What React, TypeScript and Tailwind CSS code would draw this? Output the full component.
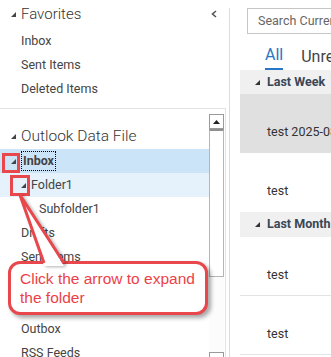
import React from "react";

const FONT = "font-['Roboto','Noto_Sans',sans-serif]";

// small filled corner triangle used by Outlook for expanded nodes
function Tri({ color = "#444" }: { color?: string }) {
  return (
    <svg width="5" height="5" viewBox="0 0 5 5" className="shrink-0">
      <polygon points="5,0 5,5 0,5" fill={color} />
    </svg>
  );
}

function FolderRow({
  label,
  indent,
  expanded,
  bg = "",
  bold,
  focus,
}: {
  label: string;
  indent: number;
  expanded?: boolean;
  bg?: string;
  bold?: boolean;
  focus?: boolean;
}) {
  return (
    <div className={`h-[24px] flex items-center ${bg}`} style={{ paddingLeft: expanded ? indent - 11 : indent }}>
      {expanded && <Tri />}
      {focus ? (
        <span className="ml-[5px] h-[20px] px-[1px] flex items-center border border-dotted border-black">
          <span className={`text-[12.5px] text-[#444] ${bold ? "font-bold" : ""}`}>{label}</span>
        </span>
      ) : (
        <span className={`${expanded ? "ml-[5px]" : ""} text-[12.5px] text-[#444] ${bold ? "font-bold" : ""}`}>
          {label}
        </span>
      )}
    </div>
  );
}

function MailRow({ text, selected, line }: { text: string; selected?: boolean; line?: boolean }) {
  return (
    <div
      className={`h-[59px] shrink-0 pl-[27px] pt-[29px] ${selected ? "bg-[#e0e0e0]" : "bg-white"} ${
        line ? "border-b border-[#e3e3e3]" : ""
      }`}
    >
      <div className="text-[12.5px] leading-[18px] text-[#333] whitespace-nowrap">{text}</div>
    </div>
  );
}

function GroupHeader({ label, h }: { label: string; h: string }) {
  return (
    <div className={`${h} shrink-0 bg-[#f0f0f0] flex items-center pl-[15px] gap-[7px]`}>
      <Tri color="#333" />
      <span className="text-[12.5px] font-bold text-[#3a4655] whitespace-nowrap">{label}</span>
    </div>
  );
}

export default function App() {
  return (
    <div className={`relative w-[331px] h-[357px] overflow-hidden bg-white flex ${FONT}`}>
      {/* folder pane */}
      <div className="w-[229px] flex flex-col">
        <div className="h-[29px] shrink-0 flex items-center pl-[11px]">
          <Tri />
          <span className="ml-[5px] text-[15px] font-light text-[#333]">Favorites</span>
          <svg width="6" height="8" viewBox="0 0 6 8" className="ml-auto mr-[12px] mb-[2px]">
            <polyline points="5,1 1.5,4 5,7" fill="none" stroke="#555" strokeWidth="1.6" />
          </svg>
        </div>
        <div className="pl-[21px] text-[12.5px] text-[#444] shrink-0">
          <div className="h-[24px] flex items-center">Inbox</div>
          <div className="h-[24px] flex items-center">Sent Items</div>
          <div className="h-[24px] flex items-center">Deleted Items</div>
        </div>
        <div className="h-[7px] shrink-0" />

        <div className="w-[226px] flex-1 flex border-t border-r border-[#e3e3e3] overflow-hidden">
          <div className="flex-1 pt-[15px]">
            <div className="h-[25px] flex items-center pl-[11px]">
              <Tri />
              <span className="ml-[5px] text-[15.5px] font-light text-[#333]">Outlook Data File</span>
            </div>
            <FolderRow label="Inbox" indent={22} expanded bold focus bg="bg-[#cce4f7]" />
            <FolderRow label="Folder1" indent={32} expanded bg="bg-[#e5f1fb]" />
            <FolderRow label="Subfolder1" indent={39} />
            <FolderRow label="Drafts" indent={21} />
            <FolderRow label="Sent Items" indent={21} />
            <FolderRow label="Deleted Items" indent={21} />
            <FolderRow label="Junk Email" indent={21} />
            <FolderRow label="Outbox" indent={21} />
            <FolderRow label="RSS Feeds" indent={21} />
          </div>
          {/* scrollbar */}
          <div className="w-[15px] mr-px mt-[5px] flex flex-col shrink-0">
            <div className="h-[15px] shrink-0 border border-[#9a9a9a] flex items-center justify-center">
              <svg width="7" height="4" viewBox="0 0 7 4">
                <polygon points="3.5,0 7,4 0,4" fill="#222" />
              </svg>
            </div>
            <div className="h-[148px] shrink-0 border border-t-[2px] border-[#b5b5b5] border-t-[#8f8f8f] bg-white" />
            <div className="h-[75px] shrink-0 bg-[#fcfcfc]" />
            <div className="h-[15px] shrink-0 border border-[#9a9a9a]" />
          </div>
        </div>
      </div>

      <div className="w-px mt-[8px] bg-[#dcdcdc]" />

      {/* message list */}
      <div className="flex-1 flex flex-col overflow-hidden">
        <div className="mt-[8px] ml-[17px] h-[26px] w-[110px] shrink-0 border border-[#c6c6c6] flex items-center pl-[10px]">
          <span className="text-[12.5px] text-[#666] whitespace-nowrap">Search Current Mailbox</span>
        </div>
        <div className="h-[36px] shrink-0 flex pl-[35px] gap-[18px] whitespace-nowrap">
          <div className="pt-[11px] flex flex-col">
            <span className="h-[20px] leading-[20px] text-[16px] text-[#2a76c6]">All</span>
            <span className="mt-[3px] h-[2px] bg-[#2a76c6]" />
          </div>
          <div className="pt-[11px]">
            <span className="h-[20px] leading-[20px] text-[16px] text-[#444]">Unread</span>
          </div>
        </div>
        <div className="ml-[10px] flex flex-col">
          <GroupHeader label="Last Week" h="h-[24px]" />
          <MailRow text="test 2025-08-05" selected />
          <MailRow text="test" />
          <GroupHeader label="Last Month" h="h-[25px]" />
          <MailRow text="test" line />
          <MailRow text="test" line />
        </div>
      </div>

      {/* annotation overlay */}
      <div className="absolute left-[2px] top-[153px] w-[18px] h-[20px] border-[3px] border-[#e8474b]" />
      <div className="absolute left-[10px] top-[175px] w-[20px] h-[21px] border-[3px] border-[#e8474b]" />
      <div className="absolute left-[8px] top-[261px] w-[200px] h-[54px] border-[3px] border-[#e8474b] rounded-[12px] bg-white shadow-[3px_3px_4px_rgba(0,0,0,0.35)] flex flex-col justify-center pl-[9px]">
        <div className="font-['Liberation_Sans',Arial,sans-serif] text-[15.5px] leading-[19px] text-[#ec3f48]">
          Click the arrow to expand
          <br />
          the folder
        </div>
      </div>
      <svg
        width="80"
        height="80"
        viewBox="0 0 80 80"
        className="absolute left-0 top-[190px] drop-shadow-[2px_1px_1.5px_rgba(0,0,0,0.3)]"
      >
        <polygon points="20,5 44,76 64,76" fill="#fff" />
        <polyline points="44,73 20,5 64,73" fill="none" stroke="#e8474b" strokeWidth="3" strokeLinejoin="miter" />
      </svg>
    </div>
  );
}
